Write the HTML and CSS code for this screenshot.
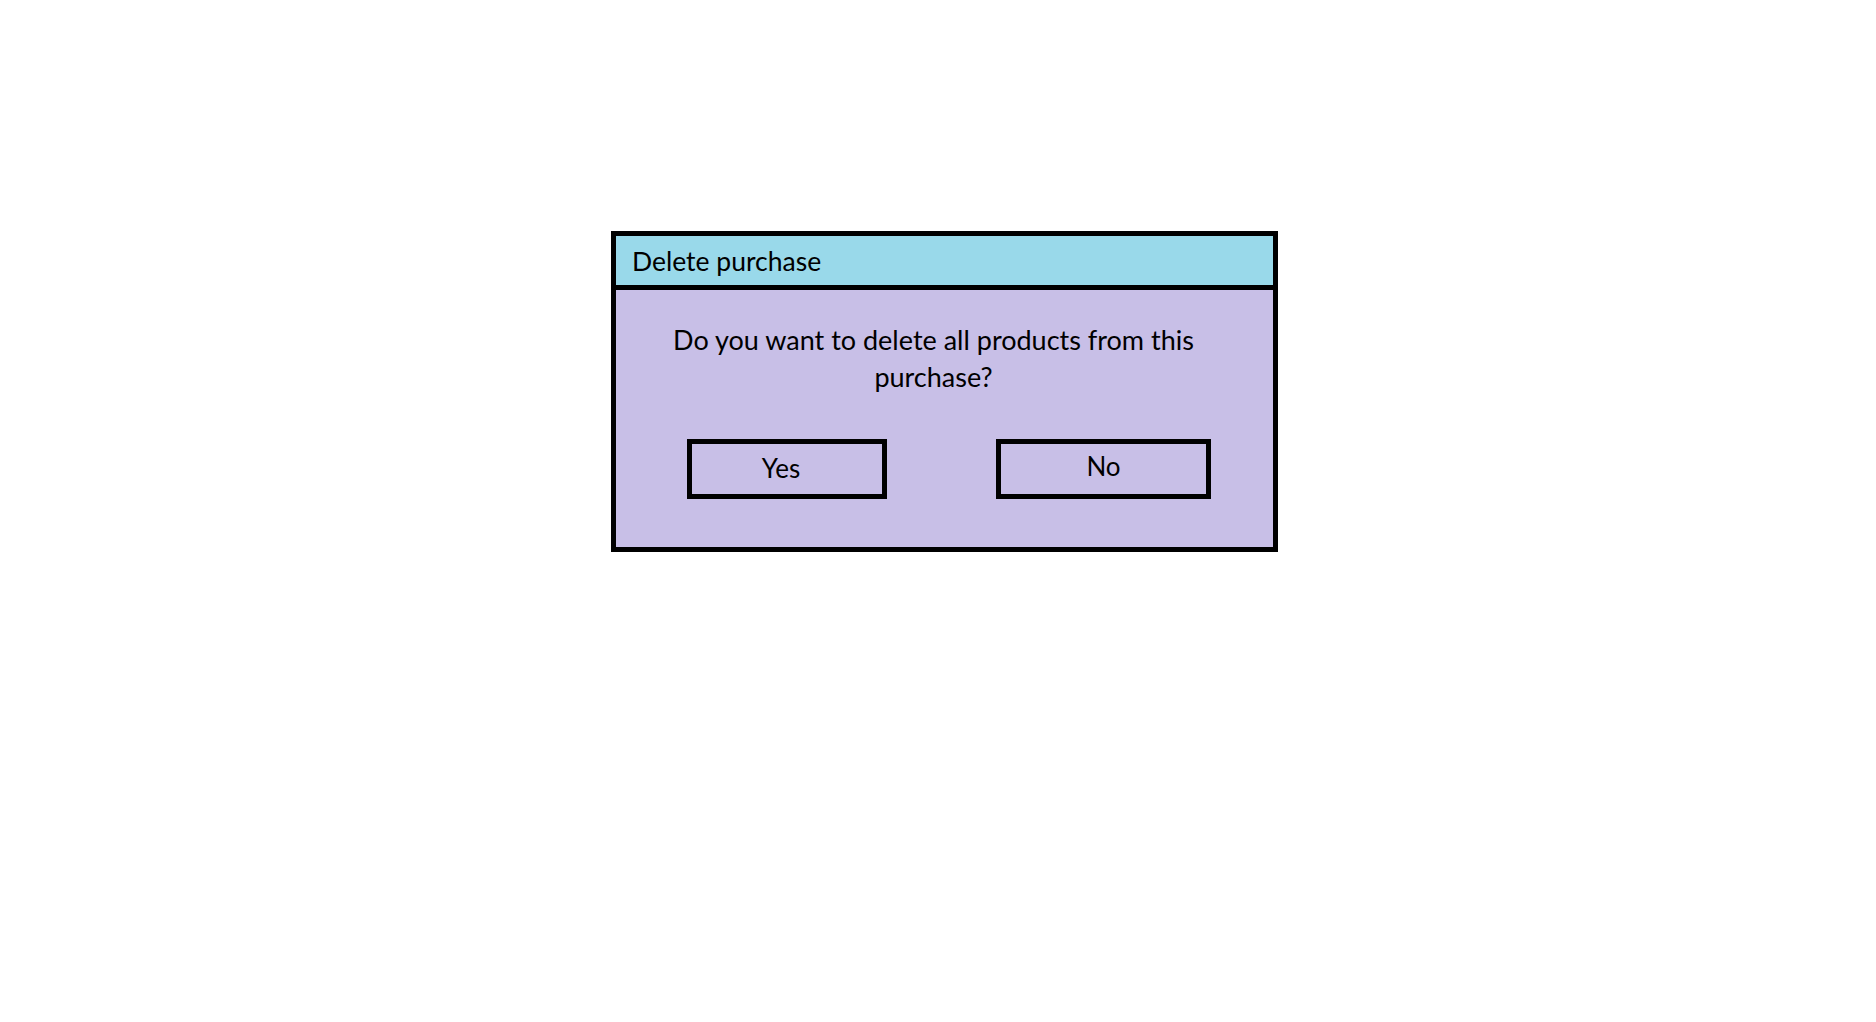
FILE: index.html
```html
<!DOCTYPE html>
<html>
<head>
<meta charset="utf-8">
<link rel="stylesheet" href="styles.css">
</head>
<body>
<div class="page">
  <div class="dialog">
    <div class="dialog-header">Delete purchase</div>
    <div class="dialog-body">
      <p class="message">Do you want to delete all products from this purchase?</p>
      <div class="actions">
        <div class="btn btn-yes">Yes</div>
        <div class="btn btn-no">No</div>
      </div>
    </div>
  </div>
</div>
</body>
</html>
```

FILE: styles.css
```css
html, body {
  margin: 0;
  padding: 0;
  background: #ffffff;
}
body {
  font-family: Lato, "Open Sans", sans-serif;
  color: #000;
}
.page {
  padding: 231px 0 0 611px;
}
.dialog {
  box-sizing: border-box;
  width: 667px;
  height: 321px;
  border: 5px solid #000;
  background: #c8bfe7;
  display: flex;
  flex-direction: column;
}
.dialog-header {
  height: 54px;
  box-sizing: border-box;
  background: #99d9ea;
  border-bottom: 5px solid #000;
  font-size: 26.5px;
  line-height: 50px;
  padding-left: 16px;
}
.dialog-body {
  flex: 1;
  display: flex;
  flex-direction: column;
}
.message {
  margin: 31px 0 0 0;
  padding: 0 62px 0 40px;
  text-align: center;
  font-size: 27px;
  line-height: 37px;
}
.actions {
  display: flex;
  margin-top: 44px;
  padding-left: 71px;
  gap: 109px;
}
.btn {
  box-sizing: border-box;
  height: 60px;
  border: 5px solid #000;
  font-size: 26px;
  text-align: center;
}
.btn-yes {
  width: 200px;
  line-height: 48px;
  padding-right: 12px;
}
.btn-no {
  width: 215px;
  line-height: 44px;
}
```
